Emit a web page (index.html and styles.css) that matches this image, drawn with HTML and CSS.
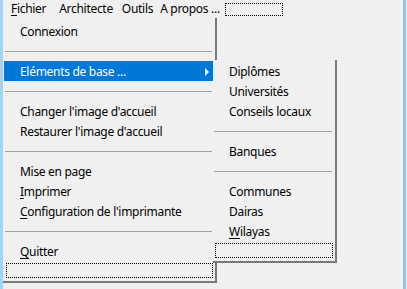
FILE: index.html
```html
<!DOCTYPE html>
<html lang="fr">
<head>
  <meta charset="UTF-8" />
  <title>Menu</title>
  <link rel="stylesheet" href="styles.css">
</head>
<body>
  <div class="window">
    <div class="menubar">
      <span class="bar-item file"><u>F</u>ichier</span>
      <span class="bar-item arch">Architecte</span>
      <span class="bar-item tools">Outils</span>
      <span class="bar-item about">A propos ...</span>
      <span class="bar-focus"></span>
    </div>

    <div class="menu main-menu">
      <div class="item">Connexion</div>
      <div class="sep"></div>
      <div class="item active">
        Eléments de base ...
        <span class="arrow"></span>
        <div class="menu sub-menu">
          <div class="item">Diplômes</div>
          <div class="item">Universités</div>
          <div class="item">Conseils locaux</div>
          <div class="sep"></div>
          <div class="item">Banques</div>
          <div class="sep"></div>
          <div class="item">Communes</div>
          <div class="item">Dairas</div>
          <div class="item"><u>W</u>ilayas</div>
          <div class="focus-row"><div class="focus-box"></div></div>
        </div>
      </div>
      <div class="sep"></div>
      <div class="item">Changer l'image d'accueil</div>
      <div class="item">Restaurer l'image d'accueil</div>
      <div class="sep"></div>
      <div class="item">Mise en page</div>
      <div class="item"><u>I</u>mprimer</div>
      <div class="item"><u>C</u>onfiguration de l'imprimante</div>
      <div class="sep"></div>
      <div class="item"><u>Q</u>uitter</div>
      <div class="focus-row"><div class="focus-box"></div></div>
    </div>
  </div>
</body>
</html>
```

FILE: styles.css
```css
body {
  margin: 0;
  background: #f0f0f0;
  font-family: "Noto Sans", "Open Sans", sans-serif;
  font-size: 12px;
  letter-spacing: -0.3px;
  color: #000;
}

.window {
  position: relative;
  height: 289px;
  margin-right: 1px;
  border-left: 3px solid #a6d1f0;
  border-right: 3px solid #8ec4ea;
  background: #f0f0f0;
}

/* menu bar */
.menubar {
  display: flex;
  align-items: center;
  height: 18px;
  padding-left: 8px;
}

.bar-item {
  line-height: 18px;
  white-space: nowrap;
}

.bar-item.file { margin-right: 13px; }
.bar-item.arch { margin-right: 9px; }
.bar-item.tools { margin-right: 7px; }
.bar-item.about { margin-right: 5px; }

.bar-focus {
  width: 56px;
  height: 11px;
  border: 1px dotted #000;
}

u {
  text-decoration-thickness: 1px;
  text-underline-offset: 2px;
}

/* dropdown menus */
.menu {
  position: absolute;
  background: #f0f0f0;
  border-right: 2px solid #7a7a7a;
  border-bottom: 2px solid #7a7a7a;
}

.main-menu {
  left: 0;
  top: 18px;
  width: 209px;
  padding: 3px 2px 0 1px;
  z-index: 1;
}

.sub-menu {
  left: 209px;
  top: -1px;
  width: 120px;
  padding: 1px 2px 0 0;
  z-index: 2;
}

.item {
  position: relative;
  height: 20px;
  line-height: 21px;
  padding-left: 16px;
  white-space: nowrap;
}

.item.active {
  background: #0078d7;
  color: #fff;
}

.sub-menu .item {
  color: #000;
  background: none;
}

.arrow {
  position: absolute;
  right: 4px;
  top: 7px;
  width: 0;
  height: 0;
  border-top: 4px solid transparent;
  border-bottom: 4px solid transparent;
  border-left: 4px solid #fff;
}

.sep {
  display: flex;
  align-items: center;
  height: 20px;
}

.sep::before {
  content: "";
  flex: 1;
  margin: 0 1px;
  border-top: 1px solid #a0a0a0;
}

.focus-row {
  height: 20px;
  padding: 2px 0 0 2px;
  box-sizing: border-box;
}

.focus-box {
  height: 13px;
  border: 1px dotted #000;
}
```
